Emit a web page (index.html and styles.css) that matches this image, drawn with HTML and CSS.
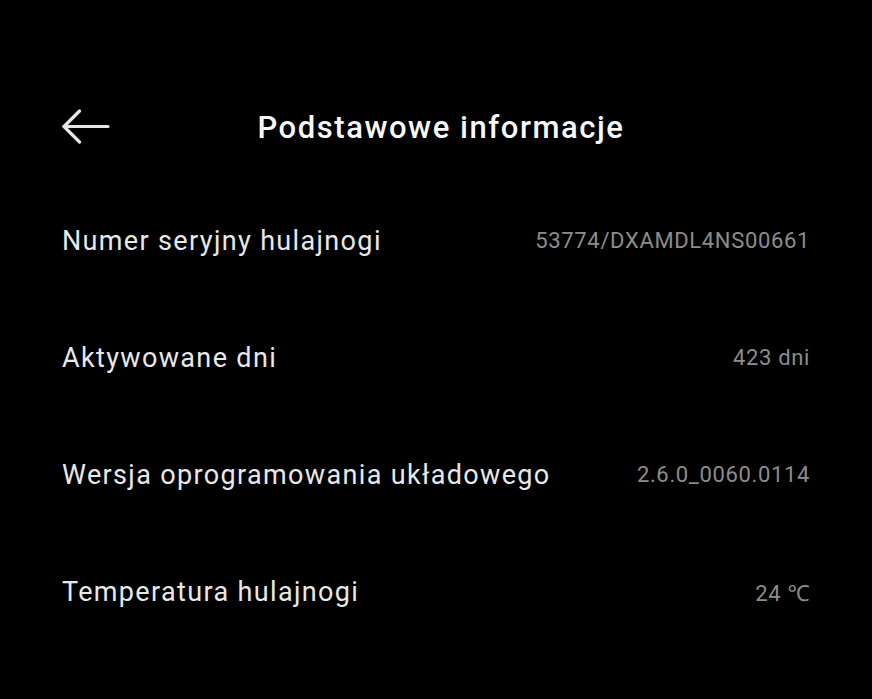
FILE: index.html
```html
<!DOCTYPE html>
<html lang="pl">
<head>
<meta charset="utf-8">
<title>Podstawowe informacje</title>
<link rel="stylesheet" href="styles.css">
</head>
<body>
<div class="screen">
  <header class="header">
    <button class="back" aria-label="Wstecz">
      <svg width="48" height="36" viewBox="0 0 48 36" fill="none" stroke="#e6e6e6" stroke-width="3.2" stroke-linecap="round" stroke-linejoin="round">
        <path d="M2 17.5 H46"/>
        <path d="M17.5 2 L2 17.5 L17.5 33"/>
      </svg>
    </button>
    <h1 class="title">Podstawowe informacje</h1>
    <span class="spacer"></span>
  </header>
  <ul class="list">
    <li class="row"><span class="label">Numer seryjny hulajnogi</span><span class="value">53774/DXAMDL4NS00661</span></li>
    <li class="row"><span class="label">Aktywowane dni</span><span class="value">423 dni</span></li>
    <li class="row"><span class="label">Wersja oprogramowania układowego</span><span class="value">2.6.0_0060.0114</span></li>
    <li class="row"><span class="label">Temperatura hulajnogi</span><span class="value">24 ℃</span></li>
  </ul>
</div>
</body>
</html>
```
FILE: styles.css
```css
html, body {
  margin: 0;
  padding: 0;
  background: #000;
}
body {
  width: 872px;
  height: 699px;
  overflow: hidden;
  font-family: Roboto, "Noto Sans", "Liberation Sans", sans-serif;
}
.screen {
  padding: 92px 62px 0 62px;
}
.header {
  height: 70px;
  display: grid;
  grid-template-columns: 100px 1fr 90px;
  align-items: center;
}
.back {
  background: none;
  border: 0;
  padding: 0;
  width: 48px;
  height: 36px;
  display: flex;
  align-items: center;
  justify-content: flex-start;
  cursor: pointer;
}
.back svg {
  display: block;
}
.title {
  margin: 0;
  text-align: center;
  color: #f7f7f7;
  font-size: 31px;
  font-weight: 500;
  letter-spacing: 1.55px;
  white-space: nowrap;
}
.list {
  list-style: none;
  margin: 20px 0 0 0;
  padding: 0;
}
.row {
  height: 117px;
  display: flex;
  align-items: center;
  justify-content: space-between;
}
.label {
  color: #e8e8e8;
  font-size: 27px;
  font-weight: 400;
  letter-spacing: 1.35px;
}
.value {
  color: #8c8c8c;
  font-size: 22px;
  font-weight: 400;
  letter-spacing: 0.65px;
}
```
